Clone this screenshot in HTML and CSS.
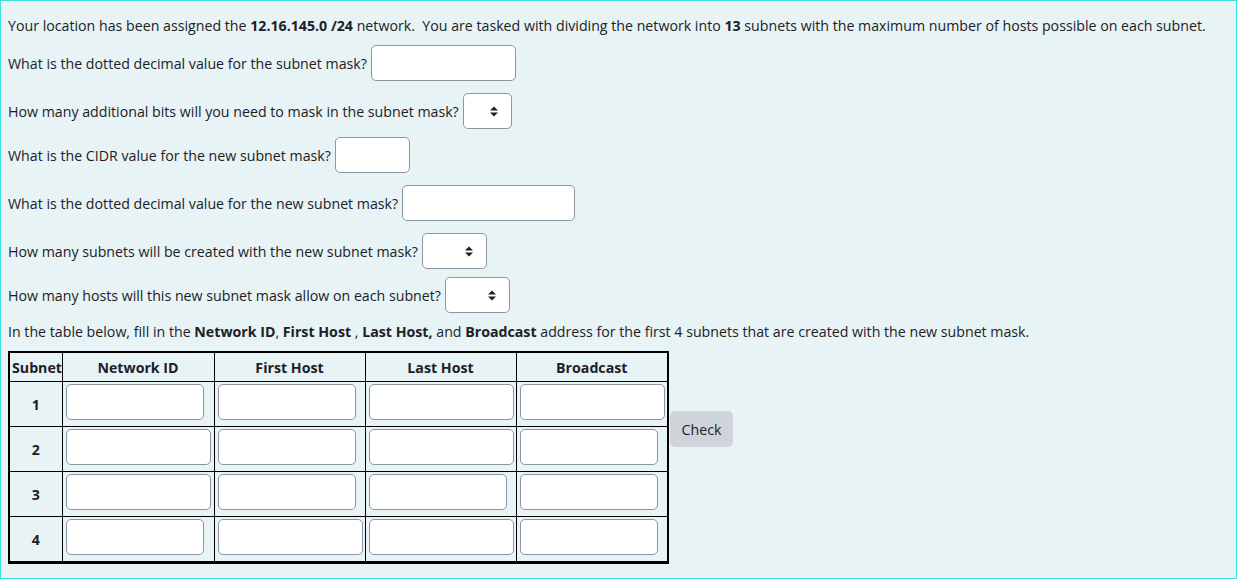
FILE: index.html
```html
<!DOCTYPE html>
<html lang="en">

<head>
	<meta charset="UTF-8">
	<meta name="viewport" content="width=device-width, initial-scale=1.0">
	<title>Subnetting</title>
	<link rel="stylesheet" href="styles.css">
</head>

<body>
	<div class="qtext">
		<p class="intro">Your location has been assigned the <b>12.16.145.0 /24</b> network.&nbsp; You are tasked with dividing the network into <b>13</b> subnets with the maximum number of hosts possible on each subnet.</p>

		<div class="row wide">
			<span>What is the dotted decimal value for the subnet mask?</span>
			<input type="text" class="txt w145">
		</div>

		<div class="row">
			<span>How many additional bits will you need to mask in the subnet mask?</span>
			<span class="sel w49"><select></select><svg class="caret" width="8" height="11" viewBox="0 0 8 11"><path d="M0 4.5 L4 0.5 L8 4.5 Z M0 6.5 L4 10.5 L8 6.5 Z" fill="#1d2125"/></svg></span>
		</div>

		<div class="row wide">
			<span>What is the CIDR value for the new subnet mask?</span>
			<input type="text" class="txt w75">
		</div>

		<div class="row wide">
			<span>What is the dotted decimal value for the new subnet mask?</span>
			<input type="text" class="txt w173">
		</div>

		<div class="row">
			<span>How many subnets will be created with the new subnet mask?</span>
			<span class="sel w65"><select></select><svg class="caret" width="8" height="11" viewBox="0 0 8 11"><path d="M0 4.5 L4 0.5 L8 4.5 Z M0 6.5 L4 10.5 L8 6.5 Z" fill="#1d2125"/></svg></span>
		</div>

		<div class="row">
			<span>How many hosts will this new subnet mask allow on each subnet?</span>
			<span class="sel w65"><select></select><svg class="caret" width="8" height="11" viewBox="0 0 8 11"><path d="M0 4.5 L4 0.5 L8 4.5 Z M0 6.5 L4 10.5 L8 6.5 Z" fill="#1d2125"/></svg></span>
		</div>

		<p class="lead">In the table below, fill in the <b>Network ID</b>, <b>First Host</b> , <b>Last Host,</b> and <b>Broadcast</b> address for the first 4 subnets that are created with the new subnet mask.</p>

		<div class="answer">
			<table class="grid">
				<colgroup>
					<col class="c0">
					<col class="c1">
					<col class="c2">
					<col class="c3">
					<col class="c4">
				</colgroup>
				<tr>
					<th class="sub">Subnet</th>
					<th>Network ID</th>
					<th>First Host</th>
					<th>Last Host</th>
					<th>Broadcast</th>
				</tr>
				<tr>
					<td class="num">1</td>
					<td><input type="text" class="txt w138"></td>
					<td><input type="text" class="txt w138"></td>
					<td><input type="text" class="txt w145"></td>
					<td><input type="text" class="txt w145"></td>
				</tr>
				<tr>
					<td class="num">2</td>
					<td><input type="text" class="txt w145"></td>
					<td><input type="text" class="txt w138"></td>
					<td><input type="text" class="txt w145"></td>
					<td><input type="text" class="txt w138"></td>
				</tr>
				<tr>
					<td class="num">3</td>
					<td><input type="text" class="txt w145"></td>
					<td><input type="text" class="txt w138"></td>
					<td><input type="text" class="txt w138"></td>
					<td><input type="text" class="txt w138"></td>
				</tr>
				<tr>
					<td class="num">4</td>
					<td><input type="text" class="txt w138"></td>
					<td><input type="text" class="txt w145"></td>
					<td><input type="text" class="txt w145"></td>
					<td><input type="text" class="txt w138"></td>
				</tr>
			</table>
			<button type="button" class="check">Check</button>
		</div>
	</div>
</body>

</html>
```

FILE: styles.css
```css
body {
	margin: 0;
	background-color: #e7f3f5;
	font-family: "Open Sans", "Noto Sans", sans-serif;
	font-size: 14.2px;
	color: #1d2125;
}

.qtext {
	border: 1px solid #3fe0e0;
	padding: 14px 7px 0 7px;
	box-sizing: border-box;
	height: 579px;
	overflow: hidden;
}

p {
	margin: 0;
	line-height: 22px;
}

b {
	font-weight: 700;
}

.intro {
	margin-bottom: 8px;
}

.row {
	display: flex;
	align-items: center;
	height: 36px;
	gap: 4px;
	margin-bottom: 8px;
}

.row.wide {
	margin-bottom: 12px;
}

.lead {
	margin-bottom: 8px;
}

.txt {
	height: 36px;
	box-sizing: border-box;
	border: 1px solid #8f959e;
	border-radius: 5px;
	background: #fff;
	padding: 0 8px;
	margin: 0;
	font-family: inherit;
	font-size: 14px;
}

.w75 { width: 75px; }
.w138 { width: 138px; }
.w145 { width: 145px; }
.w173 { width: 173px; }

.sel {
	position: relative;
	display: inline-block;
	height: 36px;
}

.sel select {
	appearance: none;
	-webkit-appearance: none;
	width: 100%;
	height: 36px;
	box-sizing: border-box;
	border: 1px solid #8f959e;
	border-radius: 5px;
	background: #fff;
	margin: 0;
}

.w49 { width: 49px; }
.w65 { width: 65px; }

.caret {
	position: absolute;
	right: 14px;
	top: 13px;
}

.answer {
	display: flex;
	align-items: flex-start;
}

.grid {
	border-collapse: collapse;
	border: 2px solid #000;
	border-bottom-width: 3px;
	table-layout: fixed;
	width: 660px;
}

.c0 { width: 53px; }
.c1 { width: 152px; }
.c2 { width: 151px; }
.c3 { width: 151px; }
.c4 { width: 152px; }

.grid th {
	border: 1px solid #000;
	height: 28px;
	padding: 0;
	font-weight: 700;
	text-align: center;
	font-size: 14.2px;
}

.grid th.sub {
	text-align: left;
	padding-left: 2px;
}

.grid td {
	border: 1px solid #000;
	height: 42px;
	padding: 2px 0 0 3px;
	vertical-align: top;
}

.grid td.num {
	text-align: center;
	font-weight: 700;
	padding: 0;
	vertical-align: middle;
}

.grid td .txt {
	display: block;
}

.check {
	margin-top: 60px;
	margin-left: 1px;
	width: 63px;
	height: 36px;
	border: none;
	border-radius: 5px;
	background: #ced4da;
	color: #1d2125;
	font-family: inherit;
	font-size: 14.2px;
	padding: 0;
}
```
